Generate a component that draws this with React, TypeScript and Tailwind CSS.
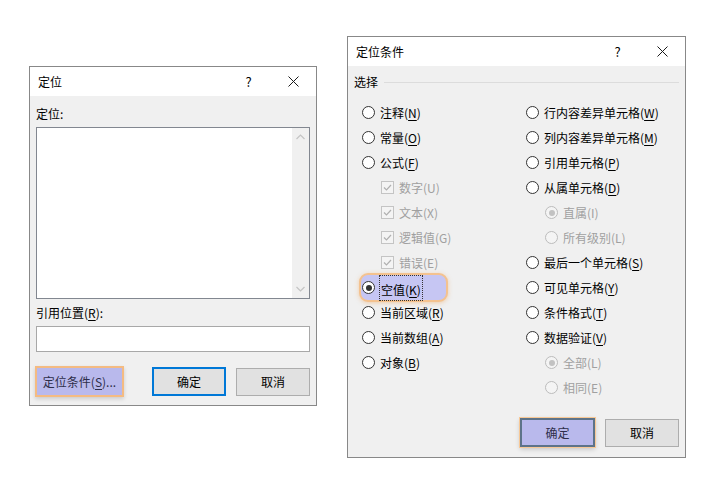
import type { ReactNode } from 'react'

const font = "font-['Noto_Sans_CJK_SC','Microsoft_YaHei',sans-serif]"

function CloseIcon() {
  return (
    <svg width="11" height="11" viewBox="0 0 11 11" className="block">
      <path d="M0.5 0.5 L10.5 10.5 M10.5 0.5 L0.5 10.5" stroke="#1a1a1a" strokeWidth="1" fill="none" />
    </svg>
  )
}

function TitleBar({ title }: { title: string }) {
  return (
    <div className="flex h-[29px] items-center bg-white">
      <span className="flex-1 pl-[8px] text-[12px] text-black">{title}</span>
      <span className="flex h-full w-[46px] items-center justify-center pl-[3px] text-[13px] text-black">?</span>
      <span className="flex h-full w-[46px] items-center justify-center">
        <CloseIcon />
      </span>
    </div>
  )
}

function Label({ text, k, disabled }: { text: string; k: string; disabled?: boolean }) {
  return (
    <span className={`whitespace-nowrap text-[12px] leading-[16px] ${disabled ? 'text-[#a0a0a0]' : 'text-black'}`}>
      {text}({disabled ? k : <span className="underline underline-offset-[2px]">{k}</span>})
    </span>
  )
}

function RadioDot({ checked, disabled }: { checked?: boolean; disabled?: boolean }) {
  return (
    <span
      className={`flex h-[13px] w-[13px] shrink-0 items-center justify-center rounded-full border ${
        disabled ? 'border-[#bcbcbc] bg-[#f4f4f4]' : 'border-[#333] bg-white'
      }`}
    >
      {checked && <span className={`h-[6px] w-[6px] rounded-full ${disabled ? 'bg-[#c2c2c2]' : 'bg-[#333]'}`} />}
    </span>
  )
}

function CheckBox() {
  return (
    <span className="flex h-[13px] w-[13px] shrink-0 items-center justify-center border border-[#c4c4c4] bg-[#f4f4f4]">
      <svg width="11" height="11" viewBox="0 0 11 11">
        <path d="M2 5.5 L4.5 8 L9 3" stroke="#b0b0b0" strokeWidth="1.2" fill="none" />
      </svg>
    </span>
  )
}

type Item = { text: string; k: string; kind?: 'radio' | 'check'; sub?: boolean; disabled?: boolean; checked?: boolean; focus?: boolean }

function Row({ item }: { item: Item }) {
  const box = item.kind === 'check' ? <CheckBox /> : <RadioDot checked={item.checked} disabled={item.disabled} />
  if (item.focus) {
    return (
      <div className="flex h-[25px] items-center">
        <div className="-ml-[3px] flex h-[29px] items-center gap-[4px] rounded-[9px] border-2 border-[#f4c28f] bg-[#c6c6f3] pl-[1px] pr-[23px] shadow-[0_1px_4px_rgba(240,170,100,0.5)]">
          {box}
          <span className="border border-dotted border-[#333] px-[1px]">
            <Label text={item.text} k={item.k} />
          </span>
        </div>
      </div>
    )
  }
  return (
    <div className={`flex h-[25px] items-center gap-[5px] ${item.sub ? 'pl-[19px]' : ''}`}>
      {box}
      <Label text={item.text} k={item.k} disabled={item.disabled} />
    </div>
  )
}

const leftItems: Item[] = [
  { text: '注释', k: 'N' },
  { text: '常量', k: 'O' },
  { text: '公式', k: 'F' },
  { text: '数字', k: 'U', kind: 'check', sub: true, disabled: true },
  { text: '文本', k: 'X', kind: 'check', sub: true, disabled: true },
  { text: '逻辑值', k: 'G', kind: 'check', sub: true, disabled: true },
  { text: '错误', k: 'E', kind: 'check', sub: true, disabled: true },
  { text: '空值', k: 'K', checked: true, focus: true },
  { text: '当前区域', k: 'R' },
  { text: '当前数组', k: 'A' },
  { text: '对象', k: 'B' },
]

const rightItems: Item[] = [
  { text: '行内容差异单元格', k: 'W' },
  { text: '列内容差异单元格', k: 'M' },
  { text: '引用单元格', k: 'P' },
  { text: '从属单元格', k: 'D' },
  { text: '直属', k: 'I', sub: true, disabled: true, checked: true },
  { text: '所有级别', k: 'L', sub: true, disabled: true },
  { text: '最后一个单元格', k: 'S' },
  { text: '可见单元格', k: 'Y' },
  { text: '条件格式', k: 'T' },
  { text: '数据验证', k: 'V' },
  { text: '全部', k: 'L', sub: true, disabled: true, checked: true },
  { text: '相同', k: 'E', sub: true, disabled: true },
]

function Button({ children, variant, className = '' }: { children: ReactNode; variant: 'plain' | 'default' | 'hot' | 'hotDefault'; className?: string }) {
  const styles = {
    plain: 'h-[28px] border border-[#adadad] bg-[#e1e1e1] text-black',
    default: 'h-[29px] border-2 border-[#0078d7] bg-[#e1e1e1] text-black',
    hot: 'h-[31px] border-2 border-[#f4bb82] bg-[#b9b9ec] text-[#2e2e4a] shadow-[0_2px_4px_rgba(0,0,0,0.15)]',
    hotDefault:
      'h-[29px] border-2 border-[#5d7389] bg-[#b9b9ec] text-[#2e2e4a] shadow-[0_0_0_1px_#f7c896,0_2px_5px_rgba(0,0,0,0.2)]',
  }[variant]
  return <div className={`flex items-center justify-center text-[12px] ${styles} ${className}`}>{children}</div>
}

function GotoDialog() {
  return (
    <div className="mt-[66px] flex h-[340px] w-[288px] shrink-0 flex-col border border-[#888] bg-[#f0f0f0]">
      <TitleBar title="定位" />
      <div className="flex flex-col px-[6px] pt-[10px]">
        <span className="h-[16px] text-[12px] leading-[16px] text-black">定位:</span>
        <div className="mt-[5px] flex h-[172px] border border-[#828790] bg-white">
          <div className="flex-1" />
          <div className="flex w-[17px] flex-col items-center justify-between bg-[#f0f0f0] py-[6px]">
            <svg width="9" height="6" viewBox="0 0 9 6">
              <path d="M0.5 5 L4.5 1 L8.5 5" stroke="#c4c4c4" strokeWidth="1.2" fill="none" />
            </svg>
            <svg width="9" height="6" viewBox="0 0 9 6">
              <path d="M0.5 1 L4.5 5 L8.5 1" stroke="#c4c4c4" strokeWidth="1.2" fill="none" />
            </svg>
          </div>
        </div>
        <span className="mt-[6px] h-[16px] text-[12px] leading-[16px] text-black">
          引用位置(<span className="underline underline-offset-[2px]">R</span>):
        </span>
        <div className="mt-[5px] h-[26px] border border-[#a8a8a8] bg-white" />
        <div className="mt-[14px] flex h-[31px] items-center">
          <Button variant="hot" className="-ml-[1px] w-[89px]">
            定位条件(<span className="underline underline-offset-[2px]">S</span>)...
          </Button>
          <Button variant="default" className="ml-[28px] w-[74px]">
            确定
          </Button>
          <Button variant="plain" className="ml-[10px] w-[74px]">
            取消
          </Button>
        </div>
      </div>
    </div>
  )
}

function SpecialDialog() {
  return (
    <div className="mt-[36px] flex h-[422px] w-[339px] shrink-0 flex-col border border-[#888] bg-[#f0f0f0]">
      <TitleBar title="定位条件" />
      <div className="flex flex-col pt-[8px]">
        <div className="flex h-[16px] items-center pl-[6px] pr-[6px]">
          <span className="text-[12px] leading-[16px] text-black">选择</span>
          <div className="ml-[6px] h-px flex-1 bg-[#dcdcdc]" />
        </div>
        <div className="mt-[10px] grid grid-cols-[164px_1fr] pl-[14px]">
          <div className="flex flex-col">
            {leftItems.map((it) => (
              <Row key={it.text} item={it} />
            ))}
          </div>
          <div className="flex flex-col">
            {rightItems.map((it) => (
              <Row key={it.text} item={it} />
            ))}
          </div>
        </div>
        <div className="mt-[18px] flex items-center justify-end pr-[6px]">
          <Button variant="hotDefault" className="w-[75px]">
            确定
          </Button>
          <Button variant="plain" className="ml-[10px] w-[74px]">
            取消
          </Button>
        </div>
      </div>
    </div>
  )
}

export default function App() {
  return (
    <div className={`flex h-[478px] w-[705px] items-start gap-[30px] bg-white pl-[29px] ${font}`}>
      <GotoDialog />
      <SpecialDialog />
    </div>
  )
}
